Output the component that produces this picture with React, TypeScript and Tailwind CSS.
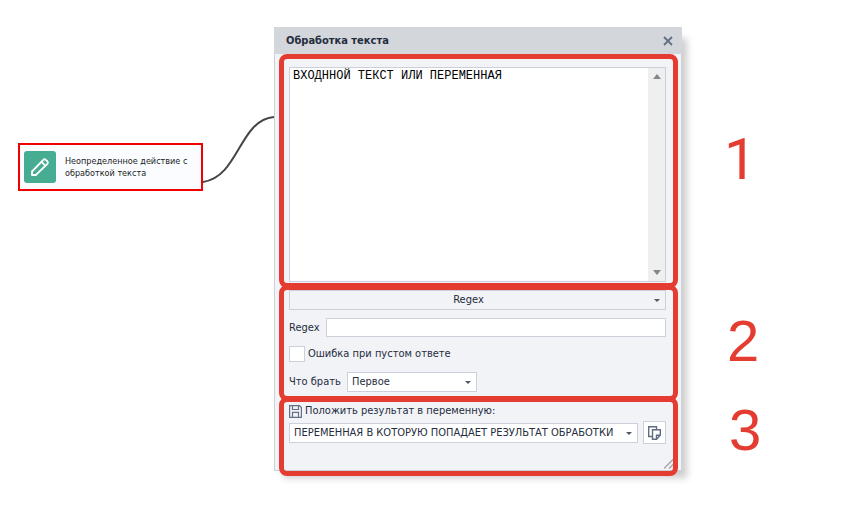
import type { ReactNode } from "react";

function Caret({ className }: { className: string }) {
  return (
    <svg viewBox="0 0 6 3" className={`pointer-events-none absolute h-[3px] w-[6px] ${className}`} aria-hidden="true">
      <path d="M0 0h6L3 3z" fill="#4f5866" />
    </svg>
  );
}

function Section({
  className,
  frame,
  number,
  numberPlace,
  children,
}: {
  className: string;
  frame: string;
  number: string;
  numberPlace: string;
  children: ReactNode;
}) {
  return (
    <section className={`relative pr-[15px] pl-[14px] ${className}`}>
      {children}
      <div className={`pointer-events-none absolute rounded-lg border-5 border-[#e53c32] ${frame}`} />
      <span className={`absolute left-full text-[58px] leading-[58px] text-[#e53c32] ${numberPlace}`}>
        {number}
      </span>
    </section>
  );
}

function ActionNode() {
  return (
    <div className="mt-[143px] flex h-12 w-[185px] shrink-0 items-center gap-[9px] border-2 border-[#f00000] bg-[#fafcff] pl-1">
      <div className="flex size-8 shrink-0 items-center justify-center rounded-[3px] bg-[#46ad92]">
        <svg viewBox="0 0 20 20" className="size-5" fill="none" stroke="#fff" strokeWidth="1.8" strokeLinejoin="round" aria-hidden="true">
          <path d="M2 18v-3.500L13.300 2.800a1.800 1.800 0 0 1 2.500 0l1.600 1.600a1.800 1.800 0 0 1 0 2.500L5.800 18z" />
          <path d="M11.500 4.800l4 4" />
        </svg>
      </div>
      <p className="text-[9px] leading-3 text-[#1c1c1c]">
        Неопределенное действие с<br />обработкой текста
      </p>
    </div>
  );
}

export default function App() {
  return (
    <main className="flex items-start bg-white pb-12 pl-[18px] font-['DejaVu_Sans_Condensed','DejaVu_Sans',Tahoma,sans-serif] text-[11px] leading-4 text-[#252d3d]">
      <ActionNode />
      <svg viewBox="0 0 71 80" className="mt-[110px] h-20 w-[71px] shrink-0" fill="none" aria-hidden="true">
        <path d="M0 72C36 67 36 10 71 7" stroke="#454545" strokeWidth="2" />
      </svg>

      <div className="mt-[27px] mr-[163px] min-w-[360px] flex-1 border border-t-0 border-[#ccd0d8] bg-[#f1f3f7] shadow-[7px_9px_7px_-2px_rgba(0,0,0,0.2)]">
        <header className="-mx-px flex h-[27px] items-center justify-between bg-[#d3d7dc] pr-[9px] pl-3">
          <h1 className="text-[11px] font-bold">Обработка текста</h1>
          <button type="button" aria-label="Закрыть" className="flex size-[10px] items-center justify-center">
            <svg viewBox="0 0 10 10" className="size-[10px]" stroke="#626e82" strokeWidth="1.8" aria-hidden="true">
              <path d="M1 1l8 8M9 1L1 9" />
            </svg>
          </button>
        </header>

        <Section className="pt-[13px] pb-1" frame="top-0 right-[3px] -bottom-[2px] left-1" number="1" numberPlace="ml-[43px] top-[76px] font-['Roboto',Arial,sans-serif]">
          <div className="flex h-[215px] border border-[#ccd0da] bg-white">
            <textarea
              aria-label="Входной текст"
              spellCheck={false}
              defaultValue="ВХОДННОЙ ТЕКСТ ИЛИ ПЕРЕМЕННАЯ"
              className="min-w-0 flex-1 resize-none bg-transparent px-[3px] font-['Liberation_Mono','Courier_New',monospace] text-[12px] leading-4 text-black outline-none"
            />
            <div className="flex w-[17px] flex-col items-center justify-between bg-[#efefef] py-[6px]" aria-hidden="true">
              <svg viewBox="0 0 8 5" className="h-[5px] w-2">
                <path d="M4 0l4 5H0z" fill="#85858d" />
              </svg>
              <svg viewBox="0 0 8 5" className="h-[5px] w-2">
                <path d="M0 0h8L4 5z" fill="#85858d" />
              </svg>
            </div>
          </div>
        </Section>

        <Section className="flex flex-col pt-1 pb-[7px]" frame="-top-px right-[3px] -bottom-[2px] left-1" number="2" numberPlace="ml-[46px] top-[26px] font-['Liberation_Sans',Arial,sans-serif]">
          <div className="relative">
            <select
              aria-label="Действие"
              className="block h-5 w-full appearance-none border border-[#ccd0da] bg-transparent pr-[18px] text-center [text-align-last:center] outline-none"
            >
              <option>Regex</option>
            </select>
            <Caret className="top-[9px] right-[6px]" />
          </div>
          <div className="mt-2 flex items-center">
            <label htmlFor="regex" className="w-[37px]">Regex</label>
            <input id="regex" type="text" className="h-[19px] min-w-0 flex-1 border border-[#ccd0da] bg-white px-1 outline-none" />
          </div>
          <label className="mt-[9px] flex items-center gap-[3px]">
            <input type="checkbox" className="size-4 appearance-none border border-[#ccd0da] bg-white" />
            Ошибка при пустом ответе
          </label>
          <div className="mt-[10px] flex items-center">
            <label htmlFor="take" className="w-[58px] whitespace-nowrap">Что брать</label>
            <div className="relative w-[130px]">
              <select id="take" className="block h-5 w-full appearance-none border border-[#ccd0da] bg-white px-1 outline-none">
                <option>Первое</option>
              </select>
              <Caret className="top-[9px] right-[6px]" />
            </div>
          </div>
        </Section>

        <Section className="pt-1 pb-[26px]" frame="-top-[2px] right-[3px] -bottom-[6px] left-1" number="3" numberPlace="ml-[48px] top-[2px] font-['Liberation_Sans',Arial,sans-serif]">
          <label htmlFor="result" className="flex items-center gap-[3px]">
            <svg viewBox="0 0 13 13" className="size-[13px]" fill="none" stroke="#667188" strokeWidth="1.2" aria-hidden="true">
              <path d="M.6.6h9.800l2 2v9.800H.6z" />
              <path d="M3.500.6v3.900h6V.6M3.500 12.400v-5h6v5" />
            </svg>
            Положить результат в переменную:
          </label>
          <div className="mt-[2px] flex items-center gap-[5px]">
            <div className="relative min-w-0 flex-1">
              <select id="result" className="block h-5 w-full appearance-none border border-[#ccd0da] bg-white px-1 outline-none">
                <option>ПЕРЕМЕННАЯ В КОТОРУЮ ПОПАДАЕТ РЕЗУЛЬТАТ ОБРАБОТКИ</option>
              </select>
              <Caret className="top-[9px] right-[6px]" />
            </div>
            <button
              type="button"
              aria-label="Копировать"
              className="flex size-[23px] items-center justify-center border border-[#ccd0da] bg-white"
            >
              <svg viewBox="0 0 13 14" className="h-[14px] w-[13px]" fill="none" stroke="#5f6b80" strokeWidth="1.4" aria-hidden="true">
                <path d="M4.500 10.500H.7V.7h7.800v3" />
                <path d="M4.500 3.700h7.800v5.600l-3.800 4h-4z" />
                <path d="M12.300 9.300H8.500v4" />
              </svg>
            </button>
          </div>
          <svg viewBox="0 0 10 10" className="absolute right-[7px] bottom-px size-[10px]" stroke="#a3a7ae" strokeWidth="1.5" aria-hidden="true">
            <path d="M0 9.500L9.500 0M5 9.500L9.500 5" />
          </svg>
        </Section>
      </div>
    </main>
  );
}
